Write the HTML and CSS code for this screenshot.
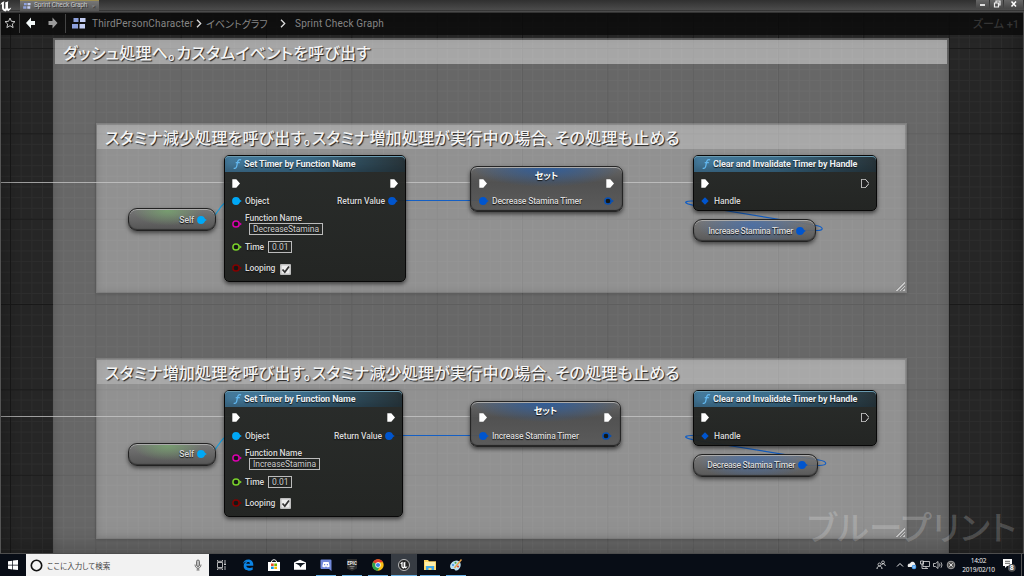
FILE: index.html
```html
<!DOCTYPE html>
<html lang="ja">
<head>
<meta charset="utf-8">
<title>Sprint Check Graph</title>
<link rel="stylesheet" href="styles.css">
</head>
<body>
<svg class="defs" aria-hidden="true">
  <symbol id="exec" viewBox="0 0 8 9"><path d="M.3.2H4.300L8 4.500 4.300 8.800H.3z"/></symbol>
  <symbol id="pin" viewBox="0 0 10 8"><circle cx="4" cy="4" r="3.900"/><path d="M7 2.300 9.800 4 7 5.700z"/></symbol>
  <symbol id="ring" viewBox="0 0 10 8"><circle cx="4" cy="4" r="3.100" fill="#151715" stroke="currentColor" stroke-width="1.500"/><path d="M7.500 2.300 9.900 4 7.500 5.700z" fill="currentColor"/></symbol>
  <symbol id="grid" viewBox="0 0 14 11"><path fill="#8da0dc" d="M1.500 0h5v4h-5zM0 6h6v4.500H0z"/><path fill="#c3cdf2" d="M8 0h5.500v4H8zM7.500 6h5.500v4.500H7.500z"/></symbol>
  <symbol id="func" viewBox="0 0 10 12"><path d="M.8 10.600C2.600 11.500 3.700 10.400 4.200 8L5.200 3.500C5.700 1.400 7 .7 9 1.400M3 4.600h4.600" fill="none" stroke="#62b7ee" stroke-width="1.400"/></symbol>
  <symbol id="ue" viewBox="0 0 12 12"><path fill="currentColor" d="M.3 5C.8 3 2.500 1.600 4.600 1.200 4 1.700 3.900 2.300 3.900 3v5c0 .9.700 1.100 1.500.6V4c0-.8-.3-1.100-.7-1.300 1.300-.4 2.400-.9 3.600-1.500L8 2.700v5.100c0 .8.600 1.100 1.500.7l1.700-1C10.700 9.300 9.700 10.500 8.200 11.200L7 10.200 5.500 11.500C3.500 11.200 2 9.800 2 8V4.500C1.500 4.200.8 4.400.3 5z"/></symbol>
</svg>

<header class="titlebar">
  <svg class="ue-logo"><use href="#ue"/></svg>
  <div class="tab"><svg class="tab-icon"><use href="#grid"/></svg><span>Sprint Check Graph</span><i>×</i></div>
  <div class="winbuttons">
    <svg viewBox="0 0 13 8"><path d="M4 5h5" stroke="#fff" stroke-width="1.600"/></svg>
    <svg viewBox="0 0 13 8"><path d="M4.500 3h4v4h-4zM6 2.500V1h4v4H8.500" fill="none" stroke="#eee" stroke-width="1.200"/></svg>
    <svg class="close" viewBox="0 0 18 8"><path d="m7 1.500 4.500 5m0-5-4.500 5" stroke="#fff" stroke-width="1.500"/></svg>
  </div>
</header>

<main class="canvas">
  <nav class="crumbs">
    <svg class="star" viewBox="0 0 12 12"><path d="m6 1 1.400 3.300 3.600.3-2.700 2.400.8 3.600L6 8.700l-3.100 1.900.8-3.600L1 4.600l3.600-.3z" fill="none" stroke="#c8c8c8"/></svg>
    <i class="divider"></i>
    <svg class="back" viewBox="0 0 10 12"><path d="M0 6 5 .5V4h4v4H5v3.500z" fill="#f2f8f8"/></svg>
    <svg class="forward" viewBox="0 0 10 12"><path d="M9.500 6 4.500.5V4h-4v4h4v3.500z" fill="#9b9b9b"/></svg>
    <i class="divider"></i>
    <svg class="graph-icon"><use href="#grid"/></svg>
    <span class="crumb c1">ThirdPersonCharacter</span>
    <svg class="chev" viewBox="0 0 6 9"><path d="m1 .8 3.700 3.700L1 8.200" fill="none" stroke="#ddd" stroke-width="1.300"/></svg>
    <span class="crumb jp">イベントグラフ</span>
    <svg class="chev second" viewBox="0 0 6 9"><path d="m1 .8 3.700 3.700L1 8.200" fill="none" stroke="#ddd" stroke-width="1.300"/></svg>
    <span class="crumb c3">Sprint Check Graph</span>
    <span class="zoom">ズーム +1</span>
  </nav>

  <section class="comment outer"><h1>ダッシュ処理へ。カスタムイベントを呼び出す</h1></section>
  <section class="comment upper"><h2>スタミナ減少処理を呼び出す。スタミナ増加処理が実行中の場合、その処理も止める</h2><i class="grip"></i></section>
  <section class="comment lower"><h2>スタミナ増加処理を呼び出す。スタミナ減少処理が実行中の場合、その処理も止める</h2><i class="grip"></i></section>

  <svg class="wires" viewBox="0 12 1024 542">
    <g stroke="#c9c9c9" stroke-width="1" opacity=".75"><path d="M0 182.500H232M396 182.500H480M613 182.500H703"/><path d="M0 416.500H232M394 416.500H480M611 416.500H703"/></g>
    <g fill="none" stroke="#145fc4" stroke-width="1.200">
      <path d="M393 200.500H483M390 435.500H483"/>
      <path d="M801 230.500h16c8 0 6-4-1-5L694 205.500c-10-2-11-4-3-4.500h14"/>
      <path d="M803 465.500h16c9 0 9-4 0-5.500L694 440c-10-2-11-4-3-4.500h14"/>
    </g>
    <g fill="none" stroke="#159ddd" stroke-width="1.200"><path d="M203 220c18 0 13-19.500 31-19.500M203 454.500c18 0 13-19.500 31-19.500"/></g>
  </svg>

  <div class="group">
    <div class="pill self"><span>Self</span><svg class="p sky"><use href="#pin"/></svg></div>
    <article class="node timer">
      <header><svg class="f"><use href="#func"/></svg><b>Set Timer by Function Name</b></header>
      <div class="row execs"><svg class="e"><use href="#exec"/></svg><svg class="e end"><use href="#exec"/></svg></div>
      <div class="row"><svg class="p sky"><use href="#pin"/></svg><span>Object</span><span class="end">Return Value</span><svg class="p blue"><use href="#pin"/></svg></div>
      <div class="row name"><svg class="p pink"><use href="#ring"/></svg><div class="stack"><span>Function Name</span><span class="field">DecreaseStamina</span></div></div>
      <div class="row time"><svg class="p green"><use href="#ring"/></svg><span>Time</span><span class="field">0.01</span></div>
      <div class="row looping"><svg class="p red"><use href="#ring"/></svg><span>Looping</span><svg class="check" viewBox="0 0 11 11"><rect width="11" height="11" rx="1" fill="#bdbdbd"/><path d="M1.500 1.500h8v8h-8z" fill="#eee"/><path d="m2.500 5.500 2.300 2.600L9 2.500" fill="none" stroke="#333" stroke-width="1.700"/></svg></div>
    </article>
    <article class="node set">
      <h3>セット</h3>
      <div class="row execs"><svg class="e"><use href="#exec"/></svg><svg class="e end"><use href="#exec"/></svg></div>
      <div class="row"><svg class="p blue"><use href="#pin"/></svg><span>Decrease Stamina Timer</span><svg class="p navy end"><use href="#ring"/></svg></div>
    </article>
    <article class="node clear">
      <header><svg class="f"><use href="#func"/></svg><b>Clear and Invalidate Timer by Handle</b></header>
      <div class="row execs"><svg class="e"><use href="#exec"/></svg><svg class="e hollow end"><use href="#exec"/></svg></div>
      <div class="row"><svg class="p blue" viewBox="0 0 10 8"><path d="m4 .3 3.700 3.700L4 7.700.3 4z"/></svg><span>Handle</span></div>
    </article>
    <div class="pill var"><span>Increase Stamina Timer</span><svg class="p blue"><use href="#pin"/></svg></div>
  </div>

  <div class="group second">
    <div class="pill self"><span>Self</span><svg class="p sky"><use href="#pin"/></svg></div>
    <article class="node timer">
      <header><svg class="f"><use href="#func"/></svg><b>Set Timer by Function Name</b></header>
      <div class="row execs"><svg class="e"><use href="#exec"/></svg><svg class="e end"><use href="#exec"/></svg></div>
      <div class="row"><svg class="p sky"><use href="#pin"/></svg><span>Object</span><span class="end">Return Value</span><svg class="p blue"><use href="#pin"/></svg></div>
      <div class="row name"><svg class="p pink"><use href="#ring"/></svg><div class="stack"><span>Function Name</span><span class="field">IncreaseStamina</span></div></div>
      <div class="row time"><svg class="p green"><use href="#ring"/></svg><span>Time</span><span class="field">0.01</span></div>
      <div class="row looping"><svg class="p red"><use href="#ring"/></svg><span>Looping</span><svg class="check" viewBox="0 0 11 11"><rect width="11" height="11" rx="1" fill="#bdbdbd"/><path d="M1.500 1.500h8v8h-8z" fill="#eee"/><path d="m2.500 5.500 2.300 2.600L9 2.500" fill="none" stroke="#333" stroke-width="1.700"/></svg></div>
    </article>
    <article class="node set">
      <h3>セット</h3>
      <div class="row execs"><svg class="e"><use href="#exec"/></svg><svg class="e end"><use href="#exec"/></svg></div>
      <div class="row"><svg class="p blue"><use href="#pin"/></svg><span>Increase Stamina Timer</span><svg class="p navy end"><use href="#ring"/></svg></div>
    </article>
    <article class="node clear">
      <header><svg class="f"><use href="#func"/></svg><b>Clear and Invalidate Timer by Handle</b></header>
      <div class="row execs"><svg class="e"><use href="#exec"/></svg><svg class="e hollow end"><use href="#exec"/></svg></div>
      <div class="row"><svg class="p blue" viewBox="0 0 10 8"><path d="m4 .3 3.700 3.700L4 7.700.3 4z"/></svg><span>Handle</span></div>
    </article>
    <div class="pill var"><span>Decrease Stamina Timer</span><svg class="p blue"><use href="#pin"/></svg></div>
  </div>
  <div class="watermark">ブループリント</div>
</main>

<footer class="taskbar">
  <div class="start"><svg viewBox="0 0 10 10"><path fill="#fff" d="M0 1.300 4.300.7v4H0zM5 .6 10 0v4.700H5zM0 5.400h4.300v4L0 8.800zM5 5.400h5V10l-5-.6z"/></svg></div>
  <div class="search">
    <svg class="cortana" viewBox="0 0 12 12"><circle cx="6" cy="6" r="4.800" fill="none" stroke="#111" stroke-width="1.500"/></svg>
    <span>ここに入力して検索</span>
    <svg class="mic" viewBox="0 0 8 12"><rect x="2.500" y="1" width="3" height="6.500" rx="1.500" fill="#bbb" stroke="#555" stroke-width=".8"/><path d="M1 5.500c0 5 6 5 6 0M4 9v2M2.500 11h3" fill="none" stroke="#555" stroke-width=".8"/></svg>
  </div>
  <div class="apps">
    <div class="app"><svg viewBox="0 0 12 12"><path d="M1.500 3.500h5v5h-5zM1.500 1v1.300h5V1M1.500 11V9.800h5V11M9 1v3M9 7v4" fill="none" stroke="#ddd" stroke-width=".8"/><path d="M8.200 4.500h1.600V6H8.200z" fill="#fff"/></svg></div>
    <div class="app"><svg viewBox="0 0 12 12"><path fill="#0b84e5" d="M.8 5.200C1.300 2 3.500.4 6.300.4c3.300 0 5 2.500 5 5.400v1H4.300c.2 2.500 3.800 2.800 6.400 1.400v2.500c-3.800 2-9.200.9-9-4C1.800 4.500 3.400 3 5 2.600 3.300 2.700 1.800 3.700.8 5.200zM4.300 4.800H8C8.100 2.200 4.600 2.300 4.300 4.800z"/></svg></div>
    <div class="app"><svg viewBox="0 0 12 12"><path fill="#fff" d="M0 3h12v9H0z"/><path d="M3.500 3c0-3 5-3 5 0" fill="none" stroke="#fff"/><path fill="#e84b28" d="M3 4.500h2.700V7H3z"/><path fill="#77b800" d="M6.300 4.500H9V7H6.300z"/><path fill="#0a9be8" d="M3 7.600h2.700V10H3z"/><path fill="#fab800" d="M6.300 7.600H9V10H6.300z"/></svg></div>
    <div class="app"><svg viewBox="0 0 12 12"><path fill="#fff" d="m0 3.500 6-2.800 6 2.800v7.300H0z"/><path fill="#111821" d="M1 4h10.500L8 6.300 6.500 8.500 5.300 6.600z"/></svg></div>
    <div class="app open"><svg viewBox="0 0 12 12"><path fill="#7289da" d="M1.500.5h9q1 0 1 1V12L9 10H1.500q-1 0-1-1V1.500q0-1 1-1z"/><path fill="#fff" d="M3.300 3h5.400l1 4.500-2 1L7 7.700H5l-.7.8-2-1z"/><path fill="#7289da" d="M4 5h1.200v1.300H4zM6.800 5H8v1.300H6.800z"/></svg></div>
    <div class="app open"><svg viewBox="0 0 12 12"><path fill="#2d2d2d" d="M1 0h10v9.500L6 12 1 9.500z"/><text x="6" y="5.500" class="epic">EPIC</text><path d="M3.500 7.500h5M4.500 9.200h3" stroke="#aaa" stroke-width=".7"/></svg></div>
    <div class="app open"><svg viewBox="0 0 12 12"><circle cx="6" cy="6" r="5.700" fill="#fbc116"/><path fill="#e33b2e" d="M6 6 1 3.200A5.700 5.700 0 0 1 11 3.300H6z"/><path fill="#2ca14c" d="M6 6 1 3.200A5.700 5.700 0 0 0 5.500 11.700L8 7.500z"/><circle cx="6" cy="6" r="2.700" fill="#fff"/><circle cx="6" cy="6" r="2.100" fill="#3f83ee"/></svg></div>
    <div class="app open active"><svg viewBox="0 0 12 12"><circle cx="6" cy="6" r="5.500" fill="#222" stroke="#ddd" stroke-width=".8"/><svg x="2" y="2" width="8" height="8" color="#fff"><use href="#ue"/></svg></svg></div>
    <div class="app open"><svg viewBox="0 0 12 12"><path fill="#ffd868" d="M0 1h4l1 1.300h7V11H0z"/><path fill="#fff0aa" d="M1 3h10v4H1z"/><path fill="#44a9e5" d="M2 7h8v4H7.500V9h-3v2H2z"/></svg></div>
    <div class="app open"><svg viewBox="0 0 12 12"><path fill="#b9dff0" d="M7 1.500C2 1.500-1 6 .5 9c1 2 3 .5 4 1.200C5 12 7 12 9 10c3-3 2-8-2-8.500z"/><circle cx="3" cy="6" r="1" fill="#3b8de0"/><circle cx="5.500" cy="3.800" r="1" fill="#4aa744"/><circle cx="8" cy="7.500" r="1.100" fill="#d94836"/><path d="M11.500.5 4.500 9" stroke="#e9a248" stroke-width="1.400"/></svg></div>
  </div>
  <div class="tray">
    <svg class="people" viewBox="0 0 10 10"><path d="M1 9c0-4 5-4 5 0M5.500 5c1-2 3.500-1.500 3.800 1" fill="none" stroke="#ddd"/><circle cx="3.500" cy="4.500" r="1.500" fill="none" stroke="#ddd" stroke-width=".8"/><circle cx="7" cy="2.300" r="1.400" fill="none" stroke="#ddd" stroke-width=".8"/></svg>
    <svg class="up" viewBox="0 0 8 8"><path d="m1 5.500 3-3 3 3" fill="none" stroke="#eee"/></svg>
    <svg viewBox="0 0 10 10"><path fill="#eee" d="M1 7C0 4 2 3.500 3 3.500 4 1 7 1 8 3.500L9 7z"/><circle cx="7" cy="7" r="2.300" fill="#4b9cea"/><path d="M5.800 7h2.400" stroke="#fff" stroke-width=".7"/></svg>
    <svg viewBox="0 0 10 10"><path d="M3 1.500h6.500v5H3zM6 6.500v2M4 8.500h4M.5 1v3h3V1zM2 4v4.500h2" fill="none" stroke="#ddd" stroke-width=".8"/></svg>
    <svg viewBox="0 0 10 10"><path d="M.5 3.500h2L5 1.500v7L2.500 6.500h-2zM6.500 3.500q1 1.500 0 3M8 2.300q2 2.700 0 5.400" fill="none" stroke="#ddd" stroke-width=".8"/></svg>
    <svg viewBox="0 0 10 10"><circle cx="5" cy="5" r="3.800" fill="#555" stroke="#aaa" stroke-width=".9"/><path d="m3.300 3.300 3.400 3.400m0-3.400L3.300 6.700" stroke="#ddd"/></svg>
    <div class="clock"><span>14:02</span><span>2019/02/10</span></div>
    <svg class="notice" viewBox="0 0 13 13"><path fill="#fff" d="M0 0h9v7H4L2 9V7H0z"/><path d="M2 2.300h5M2 4.300h5" stroke="#222" stroke-width=".7"/><circle cx="8.800" cy="8.800" r="3.900" fill="#555"/><text x="8.800" y="11.200" class="badge">8</text></svg>
    <i class="peek"></i>
  </div>
</footer>
</body>
</html>
```
FILE: styles.css
```css
* { box-sizing: border-box; }
body { margin: 0; width: 1024px; height: 576px; overflow: hidden; display: flex; flex-direction: column; background: #111; color: #eee; font-family: Roboto, "Noto Sans CJK JP", sans-serif; }
svg { display: block; flex: none; overflow: visible; }
i { font-style: normal; }
.defs { position: absolute; width: 0; height: 0; }

.titlebar { height: 12px; flex: none; display: flex; align-items: flex-start; background: linear-gradient(#303030, #4c4c4c 85%, #333 86%, #555); }
.ue-logo { width: 12px; height: 12px; color: #fff; }
.tab { margin-left: 8px; width: 79px; height: 11px; padding: 0 4px 0 3px; display: flex; align-items: center; background: linear-gradient(#9a8c52 0 1px, #777 1px, #555); font-size: 6.500px; line-height: 9px; color: #c8c8c8; text-shadow: 1px 1px #333; white-space: nowrap; }
.tab-icon { width: 8px; height: 6px; margin-right: 3px; }
.tab span { letter-spacing: -.12px; }
.tab i { margin-left: auto; font-size: 6px; color: #888; }
.winbuttons { margin-left: auto; margin-right: 1px; display: flex; gap: 1px; }
.winbuttons svg { width: 13px; height: 8px; background: linear-gradient(#666, #484848); }
.winbuttons .close { width: 19px; }

.canvas { position: relative; height: 542px; flex: none; overflow: hidden; border-left: 1px solid #555; border-right: 1px solid #4a4a4a; border-bottom: 1px solid #4d4d4d; background-color: #262626;
  background-image:
    linear-gradient(90deg, #191919 1px, transparent 1px),
    linear-gradient(#191919 1px, transparent 1px),
    linear-gradient(90deg, #2d2d2d 1px, transparent 1px),
    linear-gradient(#2d2d2d 1px, transparent 1px);
  background-size: 85.333px 85.333px, 85.333px 85.333px, 10.667px 10.667px, 10.667px 10.667px;
  background-position: 9px 36px, 9px 36px, 9px 4px, 9px 4px; }
.canvas::after { content: ""; position: absolute; inset: 0; box-shadow: inset 0 0 28px rgba(0,0,0,.35); pointer-events: none; }

.crumbs { position: relative; z-index: 2; height: 23px; display: flex; align-items: center; padding: 0 4px 2px 3px; background: rgba(10,10,10,.8); border-top: 1px solid #333; font-size: 10px; color: #858585; white-space: nowrap; }
.star { width: 12px; height: 12px; }
.divider { width: 1px; height: 19px; background: #444; margin-left: 3px; }
.back { width: 10px; height: 12px; margin-left: 6px; }
.forward { width: 10px; height: 12px; margin-left: 12px; }
.divider + .graph-icon { margin-left: 6px; }
.forward + .divider { margin-left: 7px; }
.graph-icon { width: 14px; height: 11px; }
.c1 { margin-left: 6px; width: 101px; letter-spacing: .2px; }
.chev { width: 6px; height: 9px; margin-left: 3px; }
.jp { margin-left: 4px; width: 62px; font-feature-settings: "palt"; }
.chev.second { margin-left: 12px; }
.c3 { margin-left: 9px; letter-spacing: .2px; }
.zoom { margin-left: auto; font-size: 11px; font-weight: 500; color: #343434; font-feature-settings: "palt"; }

.comment { position: absolute; border: 1px solid rgba(40,40,40,.18); }
.comment h1, .comment h2 { margin: 1px; height: 24px; padding-left: 8px; line-height: 24px; font-family: "Noto Sans CJK JP", sans-serif; font-size: 16px; font-weight: 500; letter-spacing: .2px; color: #f4f4f4; text-shadow: 1px 1px 1px #222; white-space: nowrap; font-feature-settings: "palt"; }
.outer { left: 52px; top: 26px; width: 896px; height: 540px; background: rgba(255,255,255,.3); box-shadow: inset 0 0 8px rgba(0,0,0,.12); }
.outer h1 { background: rgba(255,255,255,.42); }
.upper, .lower { left: 95px; width: 811px; background: rgba(255,255,255,.28); box-shadow: inset 0 0 6px rgba(0,0,0,.12), 0 1px 3px rgba(0,0,0,.2); }
.upper h2, .lower h2 { margin: 1px 1px 0 0; background: rgba(255,255,255,.21); padding-left: 8px; }
.upper { top: 111px; height: 170px; }
.lower { top: 346px; height: 181px; }
.grip { position: absolute; right: 1px; bottom: 1px; width: 10px; height: 10px; clip-path: polygon(100% 0, 100% 100%, 0 100%); background: repeating-linear-gradient(135deg, #c8c8c8 0 1px, #888 1px 2.500px); }

.wires { position: absolute; left: -1px; top: 0; width: 1024px; height: 542px; }
.group { position: absolute; left: -1px; top: -12px; width: 1024px; height: 300px; }
.group.second { top: 222.670px; }
.node, .pill { position: absolute; font-size: 8.500px; font-weight: 500; letter-spacing: -.06px; color: #d8d8d8; white-space: nowrap; text-shadow: 0 1px 1px #111; }
.node { border: 1px solid #080808; border-radius: 5px; background: linear-gradient(rgba(34,37,35,.93), rgba(31,33,31,.96)); box-shadow: 0 2px 4px rgba(0,0,0,.6); }
.timer { left: 224px; top: 155px; width: 182px; height: 127px; }
.clear { left: 693px; top: 155px; width: 184px; height: 56px; }
.node header { height: 16px; border-radius: 4px 4px 0 0; display: flex; align-items: center; padding-left: 8px; gap: 2px; background: linear-gradient(90deg, #457b9d 0, #3b6c89 45%, rgba(48,82,101,.8) 75%, rgba(40,56,64,.7)); box-shadow: inset 0 1px #6a9ab0, inset 0 -5px 6px rgba(20,35,45,.3); }
.node header b { font-size: 9px; font-weight: 700; color: #eaf0f3; letter-spacing: -.12px; }
.f { width: 9px; height: 12px; }
.row { height: 18px; display: flex; align-items: center; padding: 0 7px; }
.row.execs { height: 20px; padding-top: 2px; }
.end { margin-left: auto; }
.e { width: 8px; height: 9px; fill: #fff; }
.hollow { fill: #222; stroke: #ddd; stroke-width: 1; }
.p { width: 10px; height: 8px; fill: currentColor; }
.p + span, .p + .stack { margin-left: 3px; }
.end + .p { margin-left: 3px; }
.sky { color: #00a8f6; } .blue { color: #0055ce; } .pink { color: #d800ad; } .green { color: #79cf2b; } .red { color: #820000; } .navy { color: #0750b5; }
.row.name { height: 27px; }
.stack { display: flex; flex-direction: column; align-items: flex-start; line-height: 10px; padding-top: 1px; }
.stack .field { margin-left: 4px; letter-spacing: -.04px; }
.field { height: 12px; border: 1px solid #bbb; padding: 0 3px; line-height: 10px; font-weight: 400; color: #ccc; }
.row.time { height: 20px; }
.time .field { margin-left: 4px; padding: 0 3px; }
.row.looping { height: 22px; }
.check { width: 11px; height: 11px; margin: 2px 0 0 5px; }
.set { left: 470px; top: 166px; width: 153px; height: 46px; border-radius: 7px; border-color: #252525; background: radial-gradient(ellipse 75px 20px at 50% 0, rgba(36,91,165,.85), transparent), linear-gradient(rgba(100,100,100,.95), rgba(78,78,78,.95) 35%, rgba(88,88,88,.95)); box-shadow: inset 0 1px #aaa, inset 0 -1px 1px #222, 0 2px 4px rgba(0,0,0,.6); }
.set h3 { margin: 0; height: 6px; text-align: center; font: 700 9px/18px "Noto Sans CJK JP", sans-serif; color: #fff; font-feature-settings: "palt"; }
.set .row { padding: 0 8px; letter-spacing: -.16px; }
.set .execs { height: 19px; padding-top: 1px; }
.pill { height: 23px; border: 1px solid #222; border-radius: 9px; display: flex; align-items: center; justify-content: flex-end; box-shadow: inset 0 1px #aaa, inset 0 -1px 1px #333, 0 2px 4px rgba(0,0,0,.55); }
.pill .p { margin-left: 3px; }
.self { left: 128px; top: 208px; width: 88px; padding-right: 8px; background: radial-gradient(ellipse 35px 15px at 45% 8%, rgba(120,170,110,.75), transparent), linear-gradient(#777, #555); }
.var { left: 693px; top: 219px; width: 123px; padding-right: 9px; letter-spacing: -.25px; background: radial-gradient(ellipse 55px 20px at 48% 25%, rgba(66,112,180,.75), transparent), linear-gradient(rgba(119,119,119,.9), rgba(83,83,83,.9)); }
.second .timer { width: 179px; }
.second .set { width: 151px; }
.second .var { width: 125px; }
.watermark { position: absolute; right: 6px; bottom: 5px; font: 500 33.500px/44px "Noto Sans CJK JP", sans-serif; letter-spacing: .6px; font-feature-settings: "palt"; color: rgba(255,255,255,.2); white-space: nowrap; }

.taskbar { height: 22px; flex: none; display: flex; background: #080d16; }
.start { width: 26px; display: grid; place-items: center; }
.start svg { width: 10px; height: 10px; }
.search { width: 183px; display: flex; align-items: center; padding: 0 7px 0 4px; background: #f2f2f2; color: #444; font: 7.500px "Noto Sans CJK JP", sans-serif; font-feature-settings: "palt"; }
.cortana { width: 13px; height: 13px; margin-right: 4px; }
.mic { width: 8px; height: 12px; margin-left: auto; }
.apps { display: flex; }
.app { width: 26px; display: grid; place-items: center; }
.app > svg { width: 12px; height: 12px; }
.open { background: linear-gradient(#6db4e8, #6db4e8) 50% 100% / 20px 1px no-repeat; }
.active { background-color: #373c43; background-size: 26px 1px; }
.epic { font: 700 4.500px Roboto, sans-serif; fill: #eee; text-anchor: middle; }
.tray { margin-left: auto; display: flex; align-items: center; gap: 3px; }
.tray svg { width: 10px; height: 10px; }
.tray .people { margin-right: 7px; }
.tray .up { width: 8px; height: 8px; }
.clock { width: 35px; margin-left: 2px; display: flex; flex-direction: column; align-items: center; font: 6.500px/9px "Noto Sans", sans-serif; color: #eee; letter-spacing: -.2px; }
.tray .notice { width: 13px; height: 13px; margin-left: 4px; }
.badge { font: 700 7px Roboto, sans-serif; fill: #fff; text-anchor: middle; }
.peek { width: 1px; height: 22px; background: #555; margin: 0 2px 0 2px; }
```
